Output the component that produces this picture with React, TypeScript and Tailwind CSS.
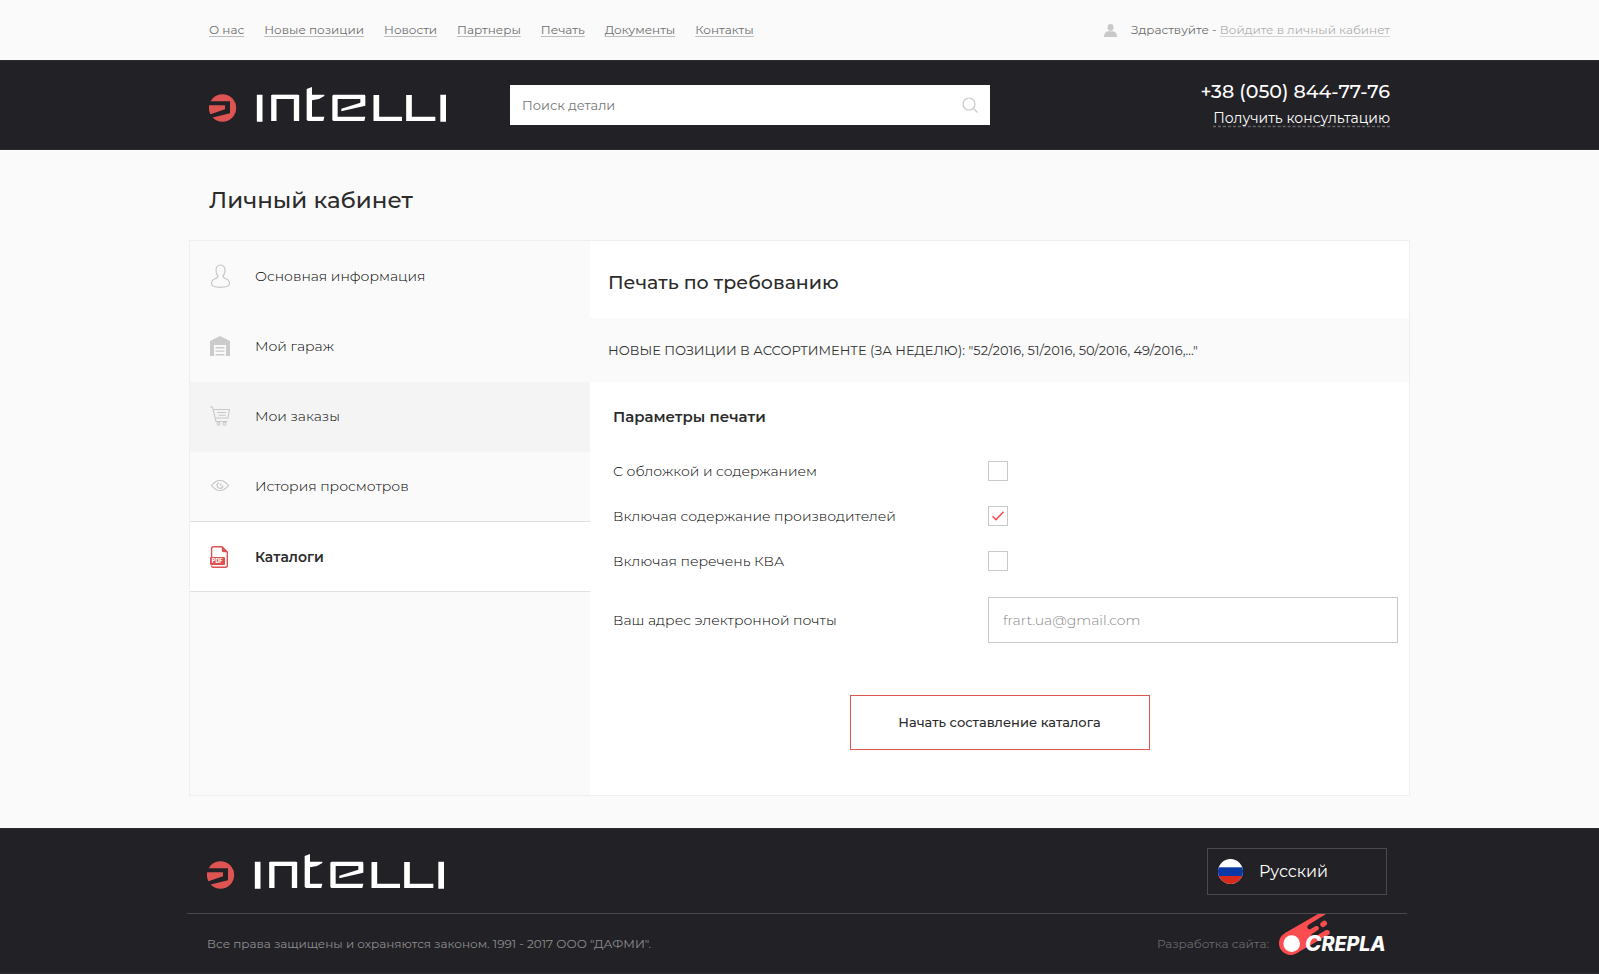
import { useState, type ReactNode } from 'react';

const navLinks = ['О нас', 'Новые позиции', 'Новости', 'Партнеры', 'Печать', 'Документы', 'Контакты'];

function Logo() {
  return (
    <svg viewBox="30 36 711 105" className="h-[35px] w-[237px] shrink-0" role="img" aria-label="Intelli">
      <circle cx="70.5" cy="99" r="41" fill="#dd5452" />
      <path d="M26 79H93V115L38 128L26 121L78 103V91H26Z" fill="#222126" />
      <g fill="none" stroke="#fff">
        <path d="M182 59V140M732.500 59V140" strokeWidth="17" />
        <path d="M224.500 138V60M292.500 138V60" strokeWidth="16" />
        <path d="M219 65.500H298" strokeWidth="13" />
        <path d="M532 60V138M630 60V138" strokeWidth="17" />
        <path d="M526 131.500H609M624 131.500H709" strokeWidth="13" />
      </g>
      <path d="M323 42L339 36V59H376V63L360 72L339 76V125H376L373 138H327L323 134Z" fill="#fff" />
      <path
        d="M403 59H497L499 62V92L427 109V101L484 83V72H416V125H499L496 138H403L400 135V62Z"
        fill="#fff"
      />
    </svg>
  );
}

function CreplaLogo() {
  return (
    <svg viewBox="480 282 324 123" className="h-[41px] w-[108px] shrink-0" role="img" aria-label="Crepla">
      <path
        d="M497 340L597 282H621L569 314C561 320 566 330 575 327L589 319C598 315 604 325 596 331L579 342C573 348 578 354 586 351L620 331C629 326 638 337 629 344L535 398Z"
        fill="#fb4d4f"
      />
      <circle cx="515" cy="370" r="35" fill="#fb4d4f" />
      <path d="M612 313L616 310" stroke="#fb4d4f" strokeWidth="16" strokeLinecap="round" />
      <circle cx="518" cy="371" r="25" fill="#fff" />
      <text
        x="558"
        y="393"
        fill="#fff"
        className="font-['Inter',sans-serif] font-extrabold italic"
        fontSize="66"
      >
        C<tspan fontSize="59">REPLA</tspan>
      </text>
    </svg>
  );
}

const icons: Record<string, ReactNode> = {
  user: (
    <svg viewBox="0 0 20 24" className="h-6 w-5" fill="none" stroke="#c8c8c8" strokeWidth="1.2">
      <path d="M10.500 1C7.800 1 6 3 6 6.300C6 8.700 6.700 10.600 8 12C8 13.600 7.200 14 5 14.800C2.500 15.700 1.500 17 1.500 19.500C1.500 21.800 5 23.300 10.500 23.300S19.500 21.800 19.500 19.500C19.500 17 18.500 15.700 16 14.800C13.800 14 13 13.600 13 12C14.300 10.600 15 8.700 15 6.300C15 3 13.200 1 10.500 1Z" />
    </svg>
  ),
  garage: (
    <svg viewBox="0 0 20 20" className="size-5" fill="#cbcbcb">
      <path d="M10 0L20 5V20H16V9H4V20H0V5Z" />
      <path d="M5.500 11H14.500V12.400H5.500ZM5.500 14.400H14.500V15.800H5.500ZM5.500 18H14.500V19.400H5.500Z" />
    </svg>
  ),
  cart: (
    <svg viewBox="0 0 20 20" className="size-5" fill="none" stroke="#c8c8c8" strokeWidth="1.100">
      <path d="M0 1H2.500L6 15.500H17.500" />
      <path d="M3.500 3.500H19.400L18 12H5.400M7 6.500H16M8.500 9.300H15.500" />
      <circle cx="8.500" cy="17.800" r="1.400" />
      <circle cx="14.500" cy="17.800" r="1.400" />
    </svg>
  ),
  eye: (
    <svg viewBox="0 0 20 20" className="size-5" fill="none" stroke="#c4c4c4" strokeWidth="1.200">
      <path d="M1.500 9.500C4 6.200 7 4.500 10 4.500S16 6.200 18.500 9.500C16 12.800 13 14.500 10 14.500S4 12.800 1.500 9.500Z" />
      <path d="M9 6.800A2.900 2.900 0 1 0 12.900 9.500M10.500 7.500V9H12" />
    </svg>
  ),
  pdf: (
    <svg viewBox="0 0 20 22" className="h-[22px] w-5" fill="none">
      <path
        d="M1.600 13V2.500Q1.600 0.700 3.400 0.700H12L17.300 6V19.500Q17.300 21.300 15.500 21.300H3.400Q1.600 21.300 1.600 19.500"
        stroke="#dc5350"
        strokeWidth="1.400"
      />
      <path d="M11.800 0.300L17.800 6.300H13.500Q11.800 6.300 11.800 4.600Z" fill="#dc5350" />
      <rect y="11" width="15" height="8" rx="1" fill="#dc5350" />
      <text x="1.800" y="17" fontSize="5.500" fill="#fff" className="font-['Inter',sans-serif] font-extrabold">
        PDF
      </text>
    </svg>
  ),
};

const menu = [
  { icon: 'user', label: 'Основная информация', style: '' },
  { icon: 'garage', label: 'Мой гараж', style: '' },
  { icon: 'cart', label: 'Мои заказы', style: 'bg-[#f4f4f4]' },
  { icon: 'eye', label: 'История просмотров', style: '' },
];

function CheckRow({ id, label, initial = false }: { id: string; label: string; initial?: boolean }) {
  const [checked, setChecked] = useState(initial);
  return (
    <div className="flex h-[45px] items-center">
      <label htmlFor={id} className="w-[375px] shrink-0">
        {label}
      </label>
      <span className="grid size-5 place-items-center">
        <input
          id={id}
          type="checkbox"
          checked={checked}
          onChange={(e) => setChecked(e.target.checked)}
          className="col-start-1 row-start-1 size-5 appearance-none border border-[#c9c9c9] bg-white"
        />
        {checked && (
          <svg viewBox="0 0 12 10" className="pointer-events-none col-start-1 row-start-1 h-2.5 w-3" fill="none">
            <path d="M0.500 5.200L4 8.700L11.500 0.700" stroke="#fb3f48" strokeWidth="1.400" />
          </svg>
        )}
      </span>
    </div>
  );
}

export default function App() {
  return (
    <div className="flex min-h-screen flex-col bg-[#fafafa] font-['Montserrat','Inter',sans-serif] text-sm text-[#2b2b2b]">
      <div className="mx-auto flex h-[60px] w-full max-w-[1221px] items-center justify-between px-5 text-xs text-[#6d6d6d]">
        <nav className="flex gap-5">
          {navLinks.map((l) => (
            <a
              key={l}
              href="#"
              className="underline decoration-[#bdbdbd] underline-offset-2 [text-decoration-skip-ink:none]"
            >
              {l}
            </a>
          ))}
        </nav>
        <div className="flex items-center">
          <svg viewBox="0 0 13 13" className="mr-3.5 size-[13px]" fill="#c9c9c9">
            <ellipse cx="6.500" cy="3.400" rx="3" ry="3.400" />
            <path d="M0 13C0 9.500 1.500 7.800 4 7.300H9C11.500 7.800 13 9.500 13 13Z" />
          </svg>
          <span>
            Здраствуйте -{' '}
            <a
              href="#"
              className="text-[#b0b0b0] underline decoration-[#d5d5d5] underline-offset-2 [text-decoration-skip-ink:none]"
            >
              Войдите в личный кабинет
            </a>
          </span>
        </div>
      </div>

      <header className="border-y border-[#2d2d31] bg-[#222126]">
        <div className="mx-auto flex h-[88px] w-full max-w-[1221px] items-center px-5">
          <a href="#" className="mr-16 pb-0.5">
            <Logo />
          </a>
          <form className="flex h-10 w-[480px] items-center bg-white px-3" onSubmit={(e) => e.preventDefault()}>
            <input
              type="search"
              aria-label="Поиск детали"
              placeholder="Поиск детали"
              className="min-w-0 flex-1 bg-transparent text-[13px] outline-none placeholder:text-[#777]"
            />
            <button type="submit" aria-label="Найти">
              <svg viewBox="0 0 16 16" className="size-4" fill="none" stroke="#c8c8c8" strokeWidth="1.200">
                <circle cx="7" cy="7" r="6" />
                <path d="M11.300 11.300L15.500 15.500" />
              </svg>
            </button>
          </form>
          <div className="ml-auto flex flex-col items-end pb-0.5 text-white">
            <a href="tel:+380508447776" className="text-[19px] leading-7 font-medium">
              +38 (050) 844-77-76
            </a>
            <a
              href="#"
              className="leading-6 underline decoration-[#66666a] decoration-dashed underline-offset-[3px] [text-decoration-skip-ink:none]"
            >
              Получить консультацию
            </a>
          </div>
        </div>
      </header>

      <main className="mx-auto w-full max-w-[1221px] flex-1 pb-8">
        <h1 className="px-5 pt-[35px] pb-[25px] text-[23px] leading-[30px] font-medium">Личный кабинет</h1>
        <div className="flex border border-[#efefef]">
          <aside className="w-[400px] shrink-0 pt-px">
            <nav>
              {menu.map((m) => (
                <a
                  key={m.icon}
                  href="#"
                  className={`flex h-[70px] items-center gap-[25px] px-5 pb-0.5 font-light text-black ${m.style}`}
                >
                  {icons[m.icon]}
                  {m.label}
                </a>
              ))}
              <a
                href="#"
                aria-current="page"
                className="-mt-px flex h-[71px] items-center gap-[25px] border-y border-[#e0e0e0] bg-white px-5 font-semibold"
              >
                {icons.pdf}
                Каталоги
              </a>
            </nav>
          </aside>

          <section className="min-w-0 flex-1 bg-white">
            <h2 className="px-[18px] pt-7 pb-[21px] text-[19px] leading-7 font-medium">Печать по требованию</h2>
            <p className="flex h-16 items-center bg-[#fafafa] px-[18px] text-[13px] text-[#333]">
              НОВЫЕ ПОЗИЦИИ В АССОРТИМЕНТЕ (ЗА НЕДЕЛЮ): "52/2016, 51/2016, 50/2016, 49/2016,..."
            </p>
            <form className="flex flex-col pt-[23px] pb-[45px]" onSubmit={(e) => e.preventDefault()}>
              <div className="pr-[11px] pl-[23px] font-light text-black">
                <h3 className="mb-[19px] text-[15px] leading-6 font-semibold text-[#2b2b2b]">Параметры печати</h3>
                <CheckRow id="cover" label="С обложкой и содержанием" />
                <CheckRow id="makers" label="Включая содержание производителей" initial />
                <CheckRow id="kba" label="Включая перечень КВА" />
                <div className="mt-3.5 flex items-center">
                  <label htmlFor="email" className="w-[375px] shrink-0">
                    Ваш адрес электронной почты
                  </label>
                  <input
                    id="email"
                    type="email"
                    placeholder="frart.ua@gmail.com"
                    className="h-[46px] min-w-0 flex-1 border border-[#c9c9c9] px-3.5 outline-none placeholder:text-[#888]"
                  />
                </div>
              </div>
              <button
                type="submit"
                className="mt-[52px] h-[55px] w-[300px] self-center border border-[#dc5350] text-[13px] font-medium"
              >
                Начать составление каталога
              </button>
            </form>
          </section>
        </div>
      </main>

      <footer className="border-y border-[#2d2d31] bg-[#222126] pr-[5px]">
        <div className="mx-auto w-full max-w-[1220px]">
          <div className="flex items-center justify-between border-b border-[#4a4a4e] px-5 pt-[19px] pb-[18px]">
            <a href="#">
              <Logo />
            </a>
            <div className="grid h-[47px] w-[180px] items-center">
              <select
                aria-label="Язык"
                className="col-start-1 row-start-1 h-full w-full appearance-none border border-[#4a4a4e] bg-[#222126] pl-[51px] text-base text-white"
              >
                <option>Русский</option>
              </select>
              <svg viewBox="0 0 25 25" className="pointer-events-none col-start-1 row-start-1 ml-[11px] size-[25px]">
                <clipPath id="flag">
                  <circle cx="12.500" cy="12.500" r="12.500" />
                </clipPath>
                <g clipPath="url(#flag)">
                  <rect width="25" height="25" fill="#fff" />
                  <rect y="8.300" width="25" height="8.700" fill="#0a39a6" />
                  <rect y="17" width="25" height="8" fill="#d52b1e" />
                </g>
              </svg>
            </div>
          </div>
          <div className="flex h-[59px] items-start justify-between px-5 text-xs leading-[59px]">
            <p className="text-[#8f8f91]">Все права защищены и охраняются законом. 1991 - 2017 ООО "ДАФМИ".</p>
            <div className="flex items-start gap-2.5">
              <span className="text-[#6a6a6c]">Разработка сайта:</span>
              <a href="#">
                <CreplaLogo />
              </a>
            </div>
          </div>
        </div>
      </footer>
    </div>
  );
}
